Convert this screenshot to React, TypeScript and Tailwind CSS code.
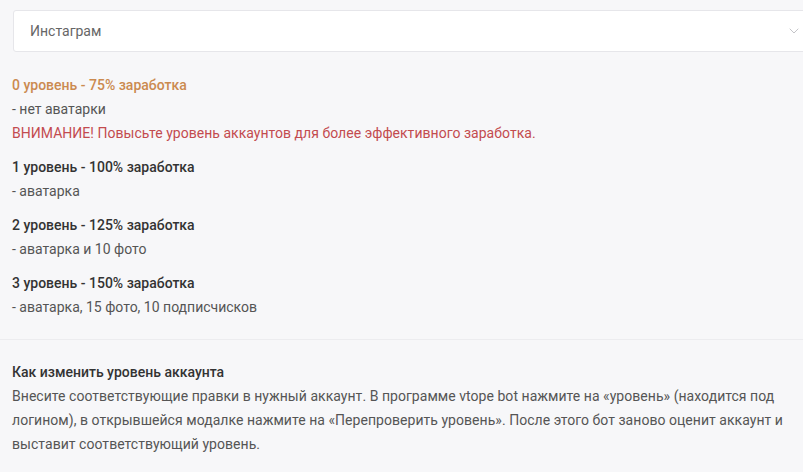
import { ChevronDown } from 'lucide-react';

const levels = [
    { title: '1 уровень - 100% заработка', note: '- аватарка' },
    { title: '2 уровень - 125% заработка', note: '- аватарка и 10 фото' },
    { title: '3 уровень - 150% заработка', note: '- аватарка, 15 фото, 10 подписчисков' },
];

export default function App() {
    return (
        <div className="min-h-[472px] w-[803px] overflow-hidden bg-[#f7f7f9] font-['Roboto',sans-serif] text-[14px] leading-[24px]">
            {/* Select */}
            <div className="pl-[13px] pt-[10px]">
                <div className="flex h-[42px] w-[800px] items-center justify-between rounded-[3px] border border-[#e6e6ea] bg-white pl-[16px] pr-[10px]">
                    <span className="text-[#666]">Инстаграм</span>
                    <ChevronDown className="h-[16px] w-[16px] text-[#c4c4c8]" strokeWidth={1.5} />
                </div>
            </div>

            {/* Levels */}
            <div className="px-[12px] pt-[21px] pb-[20px]">
                <div className="font-medium text-[#cb8a50]">0 уровень - 75% заработка</div>
                <div className="text-[#555]">- нет аватарки</div>
                <div className="tracking-[0.03px] text-[#c34b4f]">ВНИМАНИЕ! Повысьте уровень аккаунтов для более эффективного заработка.</div>
                {levels.map((l) => (
                    <div key={l.title} className="mt-[10px]">
                        <div className="font-medium text-[#333]">{l.title}</div>
                        <div className="text-[#555]">{l.note}</div>
                    </div>
                ))}
            </div>

            {/* How to */}
            <div className="border-t border-[#ececef] px-[12px] pt-[20px]">
                <div className="font-medium text-[#333]">Как изменить уровень аккаунта</div>
                <p className="tracking-[0.04px] text-[#555]">
                    Внесите соответствующие правки в нужный аккаунт. В программе vtope bot нажмите на «уровень» (находится под
                    логином), в открывшейся модалке нажмите на «Перепроверить уровень». После этого бот заново оценит аккаунт и
                    выставит соответствующий уровень.
                </p>
            </div>
        </div>
    );
}
